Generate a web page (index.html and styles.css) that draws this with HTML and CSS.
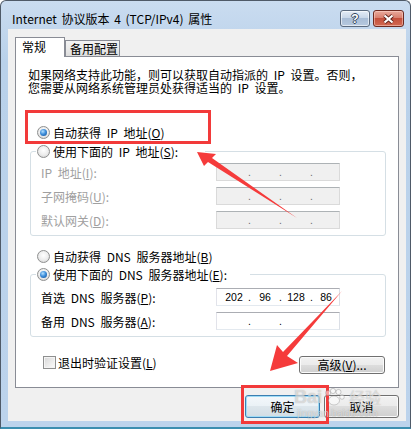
FILE: index.html
```html
<!DOCTYPE html>
<html lang="zh-CN">

<head>
    <meta charset="UTF-8">
    <meta name="viewport" content="width=device-width, initial-scale=1.0">
    <title>Internet 协议版本 4 (TCP/IPv4) 属性</title>
    <link rel="stylesheet" href="styles.css">
</head>

<body>
    <div class="screen">
        <div class="window">
            <div class="titlebar">
                <span class="title">Internet 协议版本 4 (TCP/IPv4) 属性</span>
                <div class="caption-buttons">
                    <span class="cap-btn help">?</span>
                    <span class="cap-btn close">
                        <svg width="13" height="10" viewBox="0 0 13 10">
                            <path d="M2.5 1.5 L10.5 8.5 M10.5 1.5 L2.5 8.5" stroke="#5a1f17" stroke-width="3.8" />
                            <path d="M2.5 1.5 L10.5 8.5 M10.5 1.5 L2.5 8.5" stroke="#fff" stroke-width="2.2" />
                        </svg>
                    </span>
                </div>
            </div>

            <div class="client">
                <div class="tabs">
                    <span class="tab active">常规</span>
                    <span class="tab">备用配置</span>
                </div>

                <div class="panel">
                    <p class="intro">如果网络支持此功能，则可以获取自动指派的 IP 设置。否则，<br>您需要从网络系统管理员处获得适当的 IP 设置。</p>

                    <div class="choice outer-choice ip-auto">
                        <span class="radio checked"></span><span>自动获得 IP 地址(<u>O</u>)</span>
                    </div>

                    <fieldset class="group ip-group">
                        <legend class="legend-ip">
                            <span class="choice"><span class="radio"></span><span>使用下面的 IP 地址(<u>S</u>):</span></span>
                        </legend>
                        <div class="rows">
                            <div class="field off">
                                <span class="label">IP 地址(<u>I</u>):</span>
                                <span class="ipbox off"><span></span><i>.</i><span></span><i>.</i><span></span><i>.</i><span></span></span>
                            </div>
                            <div class="field off">
                                <span class="label">子网掩码(<u>U</u>):</span>
                                <span class="ipbox off"><span></span><i>.</i><span></span><i>.</i><span></span><i>.</i><span></span></span>
                            </div>
                            <div class="field off">
                                <span class="label">默认网关(<u>D</u>):</span>
                                <span class="ipbox off"><span></span><i>.</i><span></span><i>.</i><span></span><i>.</i><span></span></span>
                            </div>
                        </div>
                    </fieldset>

                    <div class="choice outer-choice dns-auto">
                        <span class="radio"></span><span>自动获得 DNS 服务器地址(<u>B</u>)</span>
                    </div>

                    <fieldset class="group dns-group">
                        <legend class="legend-dns">
                            <span class="choice"><span class="radio checked"></span><span>使用下面的 DNS 服务器地址(<u>E</u>):</span></span>
                        </legend>
                        <div class="rows">
                            <div class="field">
                                <span class="label">首选 DNS 服务器(<u>P</u>):</span>
                                <span class="ipbox"><span>202</span><i>.</i><span>96</span><i>.</i><span>128</span><i>.</i><span>86</span></span>
                            </div>
                            <div class="field">
                                <span class="label">备用 DNS 服务器(<u>A</u>):</span>
                                <span class="ipbox"><span></span><i>.</i><span></span><i>.</i><span></span><i>.</i><span></span></span>
                            </div>
                        </div>
                    </fieldset>

                    <div class="footer-row">
                        <div class="choice check-choice">
                            <span class="checkbox"></span><span>退出时验证设置(<u>L</u>)</span>
                        </div>
                        <button class="btn small">高级(<u>V</u>)...</button>
                    </div>
                </div>

                <div class="dialog-buttons">
                    <button class="btn default">确定</button>
                    <button class="btn">取消</button>
                </div>
            </div>
        </div>

        <!-- annotations drawn over the dialog -->
        <div class="mark mark-ip"></div>
        <div class="mark mark-ok"></div>
        <svg class="arrows" width="414" height="430" viewBox="0 0 414 430">
            <polygon points="197,152 216,154 212,158 297,218 208,162 204,166" fill="#f53b3b" />
            <polygon points="270,371 277,345 283,352 342,291 287,356 298,363" fill="#f53b3b" />
        </svg>
        <div class="watermark">
            <div class="wm-top">
                <span>Bai</span>
                <svg width="22" height="18" viewBox="0 0 22 18">
                    <circle cx="5" cy="5" r="2.6" />
                    <circle cx="10" cy="3" r="2.6" />
                    <circle cx="15.5" cy="4" r="2.6" />
                    <circle cx="19" cy="9" r="2.3" />
                    <ellipse cx="11" cy="12.5" rx="5.5" ry="4.5" />
                </svg>
                <span class="wm-cn">经验</span>
            </div>
            <div class="wm-url">jingyan.baidu.com</div>
        </div>
    </div>
</body>

</html>
```

FILE: styles.css
```css
* {
    box-sizing: border-box;
}

body {
    margin: 0;
    background-color: #ffffff;
    font-family: "Noto Sans CJK SC", "Noto Sans", sans-serif;
    font-size: 12px;
    color: #000;
    overflow: hidden;
}

.screen {
    position: relative;
    width: 414px;
    height: 430px;
}

/* window frame */
.window {
    width: 411px;
    height: 429px;
    padding: 0 4px 0 7px;
    border: 1px solid #4f5a68;
    border-bottom: 2px solid #3b8eb0;
    border-radius: 6px 6px 0 0;
    background: linear-gradient(#cadcf0, #b9d1ea 60px, #bcd3ec);
}

.titlebar {
    display: flex;
    justify-content: space-between;
    align-items: flex-start;
    height: 28px;
}

.title {
    margin: 9px 0 0 4px;
    line-height: 18px;
    font-size: 12px;
    word-spacing: 2px;
}

.caption-buttons {
    display: flex;
    gap: 3px;
    margin: 9px 2px 0 0;
}

.cap-btn {
    display: flex;
    justify-content: center;
    align-items: center;
    height: 17px;
    border: 1px solid #5b6a7e;
    border-radius: 3px;
}

.help {
    width: 30px;
    background: linear-gradient(#e4ecf6 0, #c9d7e8 45%, #a9bdd6 50%, #b6c9df 100%);
    box-shadow: inset 0 0 0 1px rgba(255, 255, 255, 0.6);
    color: #fff;
    font: bold 12px "Liberation Sans", sans-serif;
    text-shadow: 1px 0 #34465c, -1px 0 #34465c, 0 1px #34465c, 0 -1px #34465c;
}

.close {
    width: 31px;
    border-color: #6d2a20;
    background: linear-gradient(#e9aa9c 0, #d9806f 45%, #c4503c 50%, #d26a52 100%);
    box-shadow: inset 0 0 0 1px rgba(255, 220, 210, 0.5);
}

/* client area */
.client {
    height: 392px;
    padding: 8px 7px 0 7px;
    background-color: #f0f0f0;
}

.tabs {
    display: flex;
    align-items: flex-end;
    height: 19px;
}

.tab {
    height: 16px;
    width: 55px;
    padding-left: 4px;
    line-height: 15px;
    border: 1px solid #898c95;
    border-bottom: none;
    background: linear-gradient(#f3f3f3, #ebebeb 50%, #dcdcdc);
}

.tab.active {
    position: relative;
    z-index: 1;
    width: 50px;
    height: 20px;
    margin-bottom: -1px;
    padding-left: 6px;
    line-height: 17px;
    background: #fff;
}

.panel {
    height: 332px;
    padding-top: 11px;
    border: 1px solid #898c95;
    background-color: #fff;
    word-spacing: 3px;
}

.intro {
    margin: 0 0 0 12px;
    line-height: 13px;
    white-space: nowrap;
}

.choice {
    display: flex;
    align-items: center;
    gap: 3px;
    height: 16px;
    white-space: nowrap;
}

.outer-choice {
    margin-left: 21px;
}

.ip-auto {
    margin-top: 30px;
}

.dns-auto {
    margin-top: 12px;
}

.radio {
    position: relative;
    flex: none;
    width: 13px;
    height: 13px;
    border: 1px solid #8e8f8f;
    border-radius: 50%;
    background: radial-gradient(circle at 50% 40%, #ffffff 0, #ececec 55%, #c9c9c9 100%);
}

.radio.checked::after {
    content: "";
    position: absolute;
    left: 2px;
    top: 2px;
    width: 7px;
    height: 7px;
    border-radius: 50%;
    background: radial-gradient(circle at 40% 35%, #b4e0ff 0, #3f8fdb 45%, #0d4a92 100%);
}

.checkbox {
    flex: none;
    width: 13px;
    height: 13px;
    margin-right: -1px;
    border: 1px solid #8e8f8f;
    background: linear-gradient(135deg, #d6d6d6, #fdfdfd);
    box-shadow: inset 0 0 0 1px #f4f4f4;
}

/* group boxes */
.group {
    margin: 0 12px 0 14px;
    padding: 0;
    min-width: 0;
    border: 1px solid #d5dfe5;
    border-radius: 3px;
}

.ip-group {
    margin-top: 3px;
}

.dns-group {
    margin-top: 2px;
}

.group legend {
    margin-left: 5px;
    padding: 0 0 0 1px;
    background: #fff;
}

.legend-ip {
    width: 169px;
}

.legend-dns {
    width: 214px;
}

.rows {
    display: flex;
    flex-direction: column;
    gap: 6px;
    padding: 4px 0 6px 10px;
}

.dns-group .rows {
    padding-top: 6px;
}

.field {
    display: flex;
    align-items: center;
    height: 18px;
}

.label {
    width: 175px;
    white-space: nowrap;
}

.field.off .label {
    color: #a0a0a0;
}

.ipbox {
    display: grid;
    grid-template-columns: 28px 3px 28px 3px 28px 3px 1fr;
    align-items: center;
    width: 124px;
    height: 18px;
    padding-left: 3px;
    border: 1px solid;
    border-color: #abadb3 #dbdfe6 #e3e9ef #e2e3ea;
    background: #fff;
    font: 10.5px "Liberation Sans", sans-serif;
    word-spacing: 0;
}

.ipbox.off {
    background: #f0f0f0;
    border-color: #adb2b5 #dadada #dadada #dadada;
    color: #6d6d6d;
}

.ipbox span {
    text-align: center;
}

.ipbox i {
    font-style: normal;
    text-align: center;
}

.footer-row {
    display: flex;
    justify-content: space-between;
    align-items: flex-start;
    margin: 17px 13px 0 27px;
}

.check-choice {
    gap: 3px;
}

/* push buttons */
.btn {
    width: 75px;
    height: 23px;
    padding: 0;
    border: 1px solid #707070;
    border-radius: 3px;
    background: linear-gradient(#f2f2f2 0, #ebebeb 49%, #dddddd 50%, #cfcfcf 100%);
    box-shadow: inset 0 0 0 1px #fbfbfb;
    font: 12px "Noto Sans CJK SC", sans-serif;
    color: #000;
}

.btn.small {
    width: 86px;
    height: 18px;
    margin-top: 2px;
    line-height: 14px;
}

.btn.default {
    border-color: #3c7fb1;
    background: linear-gradient(#f4f8fb 0, #eaf1f6 49%, #dde6ec 50%, #d2dde4 100%);
    box-shadow: inset 0 0 0 1px #9fdcf6;
}

.dialog-buttons {
    display: flex;
    justify-content: flex-end;
    gap: 4px;
    margin-top: 7px;
}

/* annotations */
.mark {
    position: absolute;
    border: 3px solid #f23a3a;
}

.mark-ip {
    left: 25px;
    top: 110px;
    width: 186px;
    height: 34px;
}

.mark-ok {
    left: 241px;
    top: 385px;
    width: 88px;
    height: 39px;
}

.arrows {
    position: absolute;
    left: 0;
    top: 0;
    pointer-events: none;
}

.watermark {
    position: absolute;
    left: 294px;
    top: 386px;
    color: rgba(255, 255, 255, 0.55);
    text-shadow: 0 0 1px rgba(110, 110, 110, 0.55);
    pointer-events: none;
}

.wm-top {
    display: flex;
    align-items: center;
    gap: 1px;
    height: 22px;
    font: bold 18px "Liberation Sans", sans-serif;
}

.wm-top svg {
    fill: rgba(255, 255, 255, 0.5);
    stroke: rgba(120, 120, 120, 0.45);
    stroke-width: 0.8;
}

.wm-cn {
    margin-left: 3px;
    font: 16px "Noto Sans CJK SC", sans-serif;
}

.wm-url {
    margin-left: 3px;
    font: 10px "Liberation Sans", sans-serif;
    line-height: 12px;
}
```
